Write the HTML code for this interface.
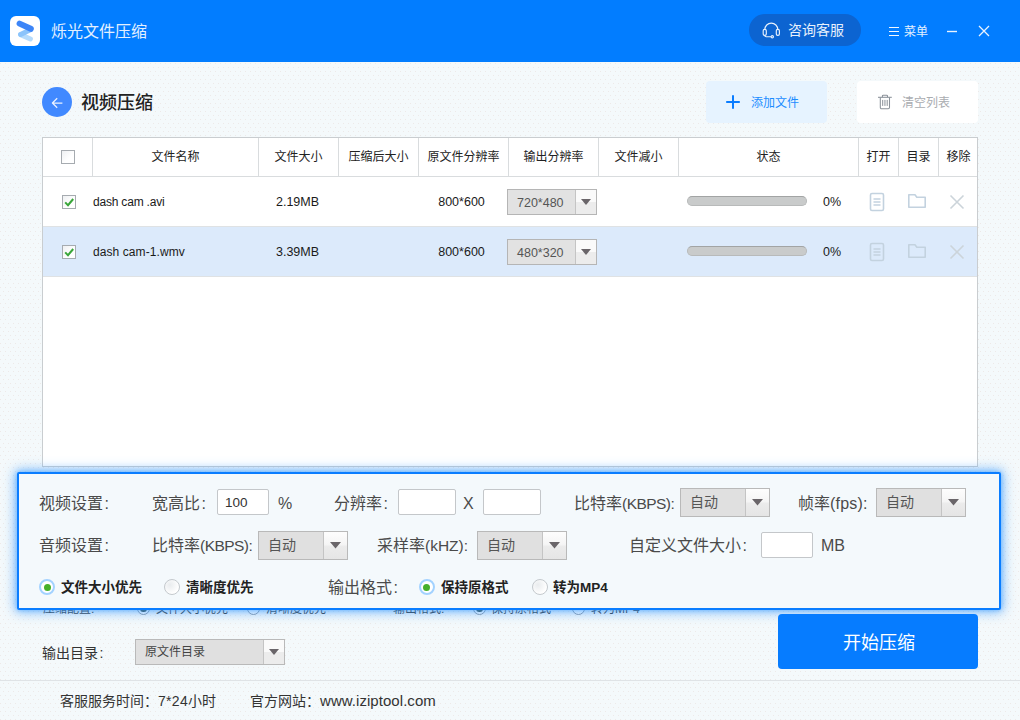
<!DOCTYPE html>
<html lang="zh-CN">
<head>
<meta charset="utf-8">
<title>烁光文件压缩</title>
<style>
*{box-sizing:border-box;margin:0;padding:0}
html,body{width:1020px;height:720px;overflow:hidden}
body{position:relative;background:#f4f9fb;font-family:"Liberation Sans","Noto Sans CJK SC",sans-serif;font-size:12px;color:#222}
.abs{position:absolute;white-space:nowrap}
/* header */
#hdr{left:0;top:0;width:1020px;height:62px;background:#027dff}
#logo{left:10px;top:16px;width:30px;height:30px;background:#fff;border-radius:6px}
#apptitle{left:51px;top:21px;font-size:16px;line-height:22px;color:#e3f0ff}
#kefu{left:749px;top:14px;width:112px;height:32px;border-radius:16px;background:#0c64d1}
#kefu span{left:39px;top:6px;font-size:14px;line-height:20px;color:#e8f1fc}
#menu{left:904px;top:23px;font-size:12px;line-height:18px;color:#e3f0ff}
/* toolbar */
#back{left:42px;top:87px;width:30px;height:30px;border-radius:50%;background:#4189ff}
#ptitle{left:81px;top:90px;font-size:18px;line-height:26px;color:#222;font-weight:500}
#addbtn{left:706px;top:81px;width:121px;height:42px;border-radius:4px;background:#e6f3ff}
#addbtn span{left:45px;top:12.5px;font-size:12px;line-height:18px;color:#1b8cff}
#clrbtn{left:857px;top:81px;width:121px;height:42px;border-radius:4px;background:#fff}
#clrbtn span{left:45px;top:12.5px;font-size:12px;line-height:18px;color:#a9acb0}
/* table */
#tbl{left:42px;top:137px;width:936px;height:330px;background:#fff;border:1px solid #c9cdd0}
.hrow{left:0;top:0;width:934px;height:39px;border-bottom:1px solid #d9dcde}
.vl{top:0;width:1px;height:39px;background:#d9dcde}
.th{top:0;height:39px;line-height:39px;text-align:center;font-size:12px;color:#222}
.row{left:0;width:934px;height:50px;border-bottom:1px solid #dfe2e4}
.row.sel{background:#dceafb}
.td{top:1px;height:49px;line-height:49px;font-size:12.5px;color:#1a1a1a}
.td.nm{font-size:12px;letter-spacing:-.2px}
.cb{left:19px;top:18px;width:14px;height:14px;border:1px solid #a6abb0;background:linear-gradient(135deg,#eef0f2 0,#fff 60%)}
.sel1{top:12px;left:464px;width:90px;height:26px;border:1px solid #b5b5b5;background:#e2e2e2}
.sel1 span{left:9px;top:1px;line-height:24px;font-size:12.5px;color:#555}
.sel1 i{left:67px;top:0;width:21px;height:24px;background:linear-gradient(#fafafa 0,#fafafa 50%,#ececec 50%,#ececec 100%);border-left:1px solid #c4c4c4}
.tri{left:5px;top:9px;width:10px;height:6px;background:#6a6569;clip-path:polygon(0 0,100% 0,50% 100%)}
.pbar{left:644px;top:19px;width:120px;height:10px;border-radius:5px;background:#c9cbcb;border:1px solid #b8baba;border-top-color:#a2a4a4}
/* panel */
#panel{left:17px;top:472px;width:984px;height:138px;background:#f4f9fc;border:2px solid #0a7dff;border-radius:2px;box-shadow:0 0 12px 2px rgba(64,158,255,.7),0 0 4px rgba(64,158,255,.55)}
.lb{font-size:16px;line-height:24px;color:#4a4a4a}
.inp{height:26px;border:1px solid #c4c7ca;border-radius:2px;background:#fff;font-size:13.5px;line-height:25px;color:#333;padding-left:7px}
.sel2{width:90px;height:29px;border:1px solid #b9b9b9;background:#e0e0e0}
.sel2 span{left:9px;top:0;line-height:27px;font-size:14px;color:#555}
.sel2 i{left:64px;top:0;width:24px;height:27px;background:linear-gradient(#fdfdfd 0,#f5f5f5 46%,#ebebeb 54%,#e5e5e5 100%);border-left:1px solid #c4c4c4}
.sel2 .tri{left:6px;top:10px;width:11px;height:6.6px}
.rd{width:16px;height:16px;border-radius:50%;border:1.5px solid #c4c9cd;background:radial-gradient(circle at 35% 35%,#e9ecee 0,#fff 70%)}
.rd.on{border:2px solid #a3d2ff;background:#fff}
.rd.on::after{content:"";position:absolute;left:2.2px;top:2.2px;width:7.6px;height:7.6px;border-radius:50%;background:#46b02a}
.rl{font-size:13.5px;line-height:22px;font-weight:bold;color:#222}
#hid{left:0;top:596px;width:1020px;height:24px}
.ht{top:5px;font-size:12px;line-height:16px;color:#333}
.hr{top:6px;width:13px;height:13px;border-radius:50%;border:1px solid #8e99a5;background:#fff}
.hr.on::after{content:"";position:absolute;left:2px;top:2px;width:7px;height:7px;border-radius:50%;background:#2a3a2a}
/* bottom */
#startbtn{left:778px;top:614px;width:200px;height:55px;border-radius:4px;background:#067cff;color:#fff;font-size:18px;line-height:58px;text-align:center;text-indent:2px}
#odir{left:135px;top:639px;width:150px;height:26px;border:1px solid #b9b9b9;background:#e0e0e0}
#odirlb{left:42px;top:643px;font-size:14px;line-height:20px;color:#333}
#odir span{left:9px;top:0;line-height:24px;font-size:12px;color:#444}
#odir i{left:127px;top:0;width:21px;height:24px;background:linear-gradient(#fafafa 0,#fafafa 50%,#ececec 50%,#ececec 100%);border-left:1px solid #c4c4c4}
#odir .tri{top:9px}
.c{margin-left:1.5px}
.la{font-size:15.5px;letter-spacing:-.55px}
.lf{letter-spacing:.2px}
.lk{font-size:15.5px}
#fline{left:0;top:680px;width:1020px;height:1px;background:#dfe3e6}
.ft{top:691px;font-size:14px;line-height:20px;color:#333}
</style>
</head>
<body>
<svg class="abs" style="left:0;top:62px" width="1020" height="658"><defs><pattern id="dz" width="5" height="8" patternUnits="userSpaceOnUse"><rect x="0" y="1" width="1" height="1" fill="#ede9e8"/><rect x="3" y="5" width="1" height="1" fill="#ede9e8"/></pattern></defs><rect width="1020" height="658" fill="url(#dz)"/></svg>
<div class="abs" id="hdr"></div>
<div class="abs" id="logo"><svg width="30" height="30" viewBox="0 0 30 30"><path d="M10.6 18.6L20.4 23" stroke="#b5dbfc" stroke-width="5" stroke-linecap="round"/><path d="M20.8 13.4L10.6 18.4" stroke="#8cc4fb" stroke-width="5" stroke-linecap="round"/><path d="M9.6 7.6L20.8 12.8" stroke="#3d85f7" stroke-width="6" stroke-linecap="round"/></svg></div>
<div class="abs" id="apptitle">烁光文件压缩</div>
<div class="abs" id="kefu"><svg class="abs" style="left:13px;top:8px" width="19" height="17" viewBox="0 0 19 17"><g fill="none" stroke="#e8f1fc" stroke-width="1.15"><path d="M2.8 7.6a6.5 6.5 0 0 1 13 0"/><rect x="1.2" y="7.4" width="3.1" height="5.9" rx="1.4"/><rect x="14.3" y="7.4" width="3.1" height="5.9" rx="1.4"/><path d="M2.7 13.3a1.5 1.5 0 0 0 1.5 1.4h4.9"/><circle cx="10.3" cy="14.7" r="1.15"/></g></svg><span class="abs">咨询客服</span></div>
<svg class="abs" style="left:886px;top:24px" width="16" height="15" viewBox="0 0 16 15"><path d="M3 3.5h10M3 7.5h10M3 11.5h10" stroke="#f2f8ff" stroke-width="1"/></svg>
<div class="abs" id="menu">菜单</div>
<svg class="abs" style="left:945px;top:28px" width="14" height="7" viewBox="0 0 14 7"><path d="M2 3.5h10" stroke="#e9f3ff" stroke-width="1.4"/></svg>
<svg class="abs" style="left:977px;top:24px" width="14" height="14" viewBox="0 0 14 14"><path d="M2 2l10 10M12 2L2 12" stroke="#e9f3ff" stroke-width="1.3"/></svg>

<div class="abs" id="back"><svg width="30" height="30" viewBox="0 0 30 30"><path d="M10.4 16h10M15.2 11.2l-4.8 4.8 4.8 4.8" fill="none" stroke="#eaf2ff" stroke-width="1.25" stroke-linejoin="round"/></svg></div>
<div class="abs" id="ptitle">视频压缩</div>
<div class="abs" id="addbtn"><svg class="abs" style="left:19px;top:13px" width="16" height="16" viewBox="0 0 16 16"><path d="M8 1.2v13.6M1.2 8h13.6" stroke="#0a7cff" stroke-width="2"/></svg><span class="abs">添加文件</span></div>
<div class="abs" id="clrbtn"><svg class="abs" style="left:20px;top:12px" width="16" height="18" viewBox="0 0 16 18"><g fill="none" stroke="#8a9199" stroke-width="1.05"><path d="M1 4.3h13.8"/><path d="M5.4 4.3V3.1a.9.9 0 0 1 .9-.9h3.3a.9.9 0 0 1 .9.9v1.2"/><path d="M3.3 4.5v9.9a1.3 1.3 0 0 0 1.3 1.3h6.6a1.3 1.3 0 0 0 1.3-1.3V4.5"/><path d="M5.7 6.9v6M7.95 6.9v6M10.2 6.9v6" stroke-width="1"/></g></svg><span class="abs">清空列表</span></div>

<div class="abs" id="tbl">
<div class="abs hrow"></div>
<div class="abs vl" style="left:49px"></div>
<div class="abs vl" style="left:215px"></div>
<div class="abs vl" style="left:295px"></div>
<div class="abs vl" style="left:375px"></div>
<div class="abs vl" style="left:465px"></div>
<div class="abs vl" style="left:555px"></div>
<div class="abs vl" style="left:635px"></div>
<div class="abs vl" style="left:815px"></div>
<div class="abs vl" style="left:855px"></div>
<div class="abs vl" style="left:895px"></div>
<div class="abs th" style="left:50px;width:165px">文件名称</div>
<div class="abs th" style="left:216px;width:79px">文件大小</div>
<div class="abs th" style="left:296px;width:79px">压缩后大小</div>
<div class="abs th" style="left:376px;width:89px">原文件分辨率</div>
<div class="abs th" style="left:466px;width:89px">输出分辨率</div>
<div class="abs th" style="left:556px;width:79px">文件减小</div>
<div class="abs th" style="left:636px;width:179px">状态</div>
<div class="abs th" style="left:816px;width:39px">打开</div>
<div class="abs th" style="left:856px;width:39px">目录</div>
<div class="abs th" style="left:896px;width:39px">移除</div>
<div class="abs cb" style="left:18px;top:12px"></div>
<div class="abs row" style="top:39px">
<div class="abs cb on"><svg width="12" height="12" viewBox="0 0 12 12" style="display:block"><path d="M2.2 6.4 L5 9.2 L10.2 3" fill="none" stroke="#3aa63a" stroke-width="2"/></svg></div>
<div class="abs td nm" style="left:50px">dash cam .avi</div>
<div class="abs td" style="left:215px;width:79px;text-align:center">2.19MB</div>
<div class="abs td" style="left:374px;width:89px;text-align:center">800*600</div>
<div class="abs sel1"><span class="abs">720*480</span><i class="abs"><b class="abs tri"></b></i></div>
<div class="abs pbar"></div>
<div class="abs td" style="left:780px">0%</div>
<svg class="abs" style="left:826px;top:15px" width="16" height="20" viewBox="0 0 16 20"><rect x="1.5" y="1.5" width="13" height="17" rx="1.5" fill="none" stroke="#c3d2df" stroke-width="1.6"/><path d="M4.5 7h7M4.5 10h7M4.5 13h7" stroke="#c3d2df" stroke-width="1.4"/></svg>
<svg class="abs" style="left:864px;top:16px" width="20" height="16" viewBox="0 0 20 16"><path d="M1.8 14.2V1.8H8l1.8 2.4h8.4v10z" fill="none" stroke="#c3d2df" stroke-width="1.6" stroke-linejoin="round"/></svg>
<svg class="abs" style="left:906px;top:17px" width="16" height="16" viewBox="0 0 16 16"><path d="M1.5 1.5l13 13M14.5 1.5l-13 13" stroke="#ccd4da" stroke-width="1.6"/></svg>
</div>
<div class="abs row sel" style="top:89px">
<div class="abs cb on"><svg width="12" height="12" viewBox="0 0 12 12" style="display:block"><path d="M2.2 6.4 L5 9.2 L10.2 3" fill="none" stroke="#3aa63a" stroke-width="2"/></svg></div>
<div class="abs td nm" style="left:50px;letter-spacing:.08px">dash cam-1.wmv</div>
<div class="abs td" style="left:215px;width:79px;text-align:center">3.39MB</div>
<div class="abs td" style="left:374px;width:89px;text-align:center">800*600</div>
<div class="abs sel1"><span class="abs">480*320</span><i class="abs"><b class="abs tri"></b></i></div>
<div class="abs pbar"></div>
<div class="abs td" style="left:780px">0%</div>
<svg class="abs" style="left:826px;top:15px" width="16" height="20" viewBox="0 0 16 20"><rect x="1.5" y="1.5" width="13" height="17" rx="1.5" fill="none" stroke="#c3d2df" stroke-width="1.6"/><path d="M4.5 7h7M4.5 10h7M4.5 13h7" stroke="#c3d2df" stroke-width="1.4"/></svg>
<svg class="abs" style="left:864px;top:16px" width="20" height="16" viewBox="0 0 20 16"><path d="M1.8 14.2V1.8H8l1.8 2.4h8.4v10z" fill="none" stroke="#c3d2df" stroke-width="1.6" stroke-linejoin="round"/></svg>
<svg class="abs" style="left:906px;top:17px" width="16" height="16" viewBox="0 0 16 16"><path d="M1.5 1.5l13 13M14.5 1.5l-13 13" stroke="#ccd4da" stroke-width="1.6"/></svg>
</div>
</div>
<div class="abs" id="hid">
<div class="abs ht" style="left:43px">压缩配置:</div>
<div class="abs hr on" style="left:137px"></div><div class="abs ht" style="left:156px">文件大小优先</div>
<div class="abs hr" style="left:247px"></div><div class="abs ht" style="left:266px">清晰度优先</div>
<div class="abs ht" style="left:393px">输出格式:</div>
<div class="abs hr on" style="left:473px"></div><div class="abs ht" style="left:491px">保持原格式</div>
<div class="abs hr" style="left:572px"></div><div class="abs ht" style="left:591px">转为MP4</div>
</div>
<div class="abs" id="panel">
<div class="abs lb" style="left:20px;top:17.6px;">视频设置<span class="c">:</span></div>
<div class="abs lb" style="left:133px;top:17.6px;">宽高比<span class="c">:</span></div>
<div class="abs inp" style="left:198px;top:15px;width:52px">100</div>
<div class="abs lb" style="left:259px;top:17.6px;">%</div>
<div class="abs lb" style="left:315px;top:17.6px;">分辨率<span class="c">:</span></div>
<div class="abs inp" style="left:379px;top:15px;width:58px"></div>
<div class="abs lb" style="left:444px;top:17.6px;">X</div>
<div class="abs inp" style="left:464px;top:15px;width:58px"></div>
<div class="abs lb" style="left:555px;top:17.6px;">比特率<span class="la">(KBPS):</span></div>
<div class="abs sel2" style="left:661px;top:14px"><span class="abs">自动</span><i class="abs"><b class="abs tri"></b></i></div>
<div class="abs lb" style="left:779px;top:17.6px;">帧率<span class="lf">(fps):</span></div>
<div class="abs sel2" style="left:857px;top:14px"><span class="abs">自动</span><i class="abs"><b class="abs tri"></b></i></div>
<div class="abs lb" style="left:20px;top:60px;">音频设置<span class="c">:</span></div>
<div class="abs lb" style="left:133px;top:60px;">比特率<span class="la">(KBPS):</span></div>
<div class="abs sel2" style="left:239px;top:57px"><span class="abs">自动</span><i class="abs"><b class="abs tri"></b></i></div>
<div class="abs lb" style="left:358px;top:60px;">采样率<span class="lk">(kHZ):</span></div>
<div class="abs sel2" style="left:458px;top:57px"><span class="abs">自动</span><i class="abs"><b class="abs tri"></b></i></div>
<div class="abs lb" style="left:610px;top:60px;">自定义文件大小<span class="c">:</span></div>
<div class="abs inp" style="left:742px;top:58px;width:52px"></div>
<div class="abs lb" style="left:802px;top:60px;">MB</div>
<div class="abs rd on" style="left:20.4px;top:105.4px"></div>
<div class="abs rl" style="left:42px;top:103px;">文件大小优先</div>
<div class="abs rd" style="left:144.8px;top:105.4px"></div>
<div class="abs rl" style="left:167px;top:103px;">清晰度优先</div>
<div class="abs lb" style="left:309px;top:102px;">输出格式<span class="c">:</span></div>
<div class="abs rd on" style="left:399.7px;top:105.4px"></div>
<div class="abs rl" style="left:422px;top:103px;">保持原格式</div>
<div class="abs rd" style="left:513px;top:105.4px"></div>
<div class="abs rl" style="left:534px;top:103px;">转为MP4</div>
</div>

<div class="abs" id="odirlb">输出目录<span class="c">:</span></div>
<div class="abs" id="odir"><span class="abs">原文件目录</span><i class="abs"><b class="abs tri"></b></i></div>
<div class="abs" id="startbtn">开始压缩</div>
<div class="abs" id="fline"></div>
<div class="abs ft" style="left:60px">客服服务时间：<span style="letter-spacing:.3px">7*24</span>小时</div>
<div class="abs ft" style="left:250px">官方网站：<span style="font-size:15px;letter-spacing:.05px">www.iziptool.com</span></div>
</body>
</html>
